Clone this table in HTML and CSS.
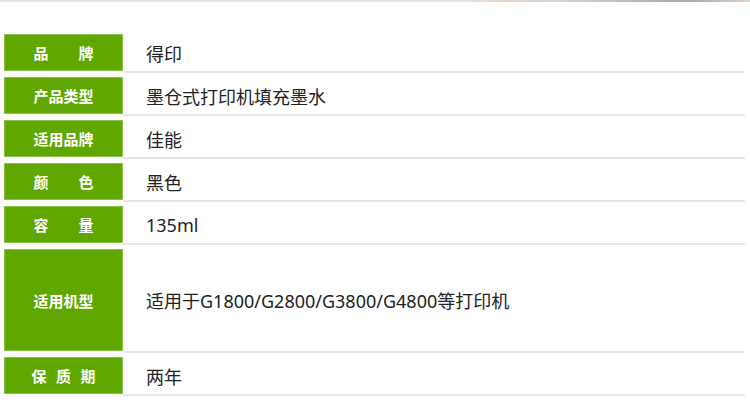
FILE: index.html
```html
<!DOCTYPE html>
<html lang="zh-CN">
<head>
<meta charset="utf-8">
<title>产品参数</title>
<link rel="stylesheet" href="styles.css">
</head>
<body>
<div class="top-strip"></div>
<div class="spec">
  <div class="row">
    <div class="label">品　　牌</div>
    <div class="value">得印</div>
  </div>
  <div class="row">
    <div class="label">产品类型</div>
    <div class="value">墨仓式打印机填充墨水</div>
  </div>
  <div class="row">
    <div class="label">适用品牌</div>
    <div class="value">佳能</div>
  </div>
  <div class="row">
    <div class="label">颜　　色</div>
    <div class="value">黑色</div>
  </div>
  <div class="row">
    <div class="label">容　　量</div>
    <div class="value">135ml</div>
  </div>
  <div class="row row-tall">
    <div class="label">适用机型</div>
    <div class="value">适用于G1800/G2800/G3800/G4800等打印机</div>
  </div>
  <div class="row">
    <div class="label"><span class="spaced">保质期</span></div>
    <div class="value">两年</div>
  </div>
</div>
</body>
</html>
```

FILE: styles.css
```css
html, body {
  margin: 0;
  padding: 0;
  background: #ffffff;
}

body {
  width: 750px;
  height: 415px;
  overflow: hidden;
  font-family: "Noto Sans CJK SC", "Noto Sans", sans-serif;
}

.top-strip {
  height: 2px;
  background: linear-gradient(to right, #e6e6e6 0%, #e6e6e6 62%, #e9d6c8 66%, #d9d2cc 75%, #b8b8b8 85%, #a9a9a9 92%, #e2d3c6 100%);
}

.spec {
  margin-top: 32px;
  margin-left: 4px;
  width: 741px;
  display: flex;
  flex-direction: column;
  gap: 4px;
}

.row {
  display: flex;
  align-items: flex-start;
  height: 39px;
}

.row-tall {
  height: 104px;
}

.label {
  box-sizing: border-box;
  width: 119px;
  height: 37px;
  flex: none;
  background: #60a800;
  border: 1px solid #88c44a;
  color: #ffffff;
  font-weight: bold;
  font-size: 15px;
  display: flex;
  align-items: center;
  justify-content: center;
  white-space: pre;
}

.spaced {
  letter-spacing: 9.5px;
  margin-right: -9.5px;
}

.row-tall .label {
  height: 102px;
}

.value {
  box-sizing: border-box;
  flex: 1;
  height: 39px;
  border-bottom: 2px solid #e6e6e6;
  padding-left: 23px;
  display: flex;
  align-items: center;
  font-family: "Noto Sans", "Noto Sans CJK SC", sans-serif;
  font-size: 18px;
  color: #222222;
}

.row-tall .value {
  height: 104px;
}
```
